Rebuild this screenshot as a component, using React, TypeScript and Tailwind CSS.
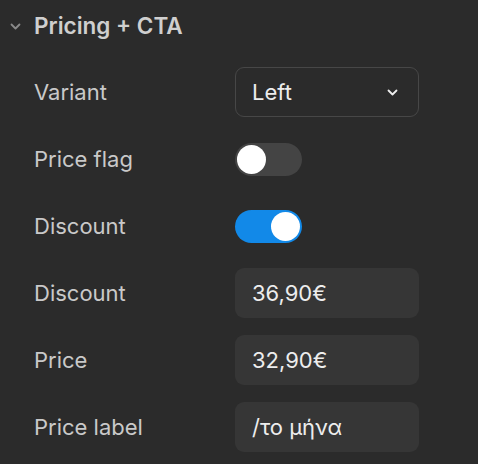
function Toggle({ on }: { on: boolean }) {
  return (
    <div
      className={
        on
          ? "flex h-[33px] w-[67px] items-center justify-end rounded-full bg-[#1289e8] px-[2px]"
          : "flex h-[33px] w-[67px] items-center justify-start rounded-full bg-[#444444] px-[2px]"
      }
    >
      <div className="h-[29px] w-[29px] rounded-full bg-white" />
    </div>
  );
}

function Field({ value }: { value: string }) {
  return (
    <div className="flex h-[50px] w-[184px] items-center rounded-[9px] bg-[#363636] px-[17px] text-[22px] text-[#ededed]">
      {value}
    </div>
  );
}

function Row({ label, children }: { label: string; children: React.ReactNode }) {
  return (
    <div className="flex h-[50px] items-center pl-[34px]">
      <div className="w-[201px] text-[22px] text-[#c9c9c9]">{label}</div>
      {children}
    </div>
  );
}

export default function App() {
  return (
    <div
      className="h-[464px] w-[478px] overflow-hidden bg-[#2b2b2b]"
      style={{ fontFamily: "Inter, 'Noto Sans', sans-serif" }}
    >
      <div className="flex h-[52px] items-center pl-[10px]">
        <svg width="11" height="7" viewBox="0 0 11 7" className="mr-[13px]">
          <path d="M1.5 1.5 L5.5 5.5 L9.5 1.5" fill="none" stroke="#8a8a8a" strokeWidth="1.8" strokeLinecap="round" strokeLinejoin="round" />
        </svg>
        <span className="text-[22.5px] font-semibold text-[#cfcfcf]">Pricing + CTA</span>
      </div>
      <div className="flex flex-col gap-[17px] pt-[15px]">
        <Row label="Variant">
          <div className="flex h-[50px] w-[184px] items-center justify-between rounded-[9px] border-[1.5px] border-[#474747] pl-[16px] pr-[20px] text-[22px] text-[#ededed]">
            <span>Left</span>
            <svg width="11" height="7" viewBox="0 0 11 7">
              <path d="M1.5 1.5 L5.5 5.5 L9.5 1.5" fill="none" stroke="#ededed" strokeWidth="1.8" strokeLinecap="round" strokeLinejoin="round" />
            </svg>
          </div>
        </Row>
        <Row label="Price flag">
          <Toggle on={false} />
        </Row>
        <Row label="Discount">
          <Toggle on={true} />
        </Row>
        <Row label="Discount">
          <Field value="36,90€" />
        </Row>
        <Row label="Price">
          <Field value="32,90€" />
        </Row>
        <Row label="Price label">
          <Field value="/το μήνα" />
        </Row>
      </div>
    </div>
  );
}
